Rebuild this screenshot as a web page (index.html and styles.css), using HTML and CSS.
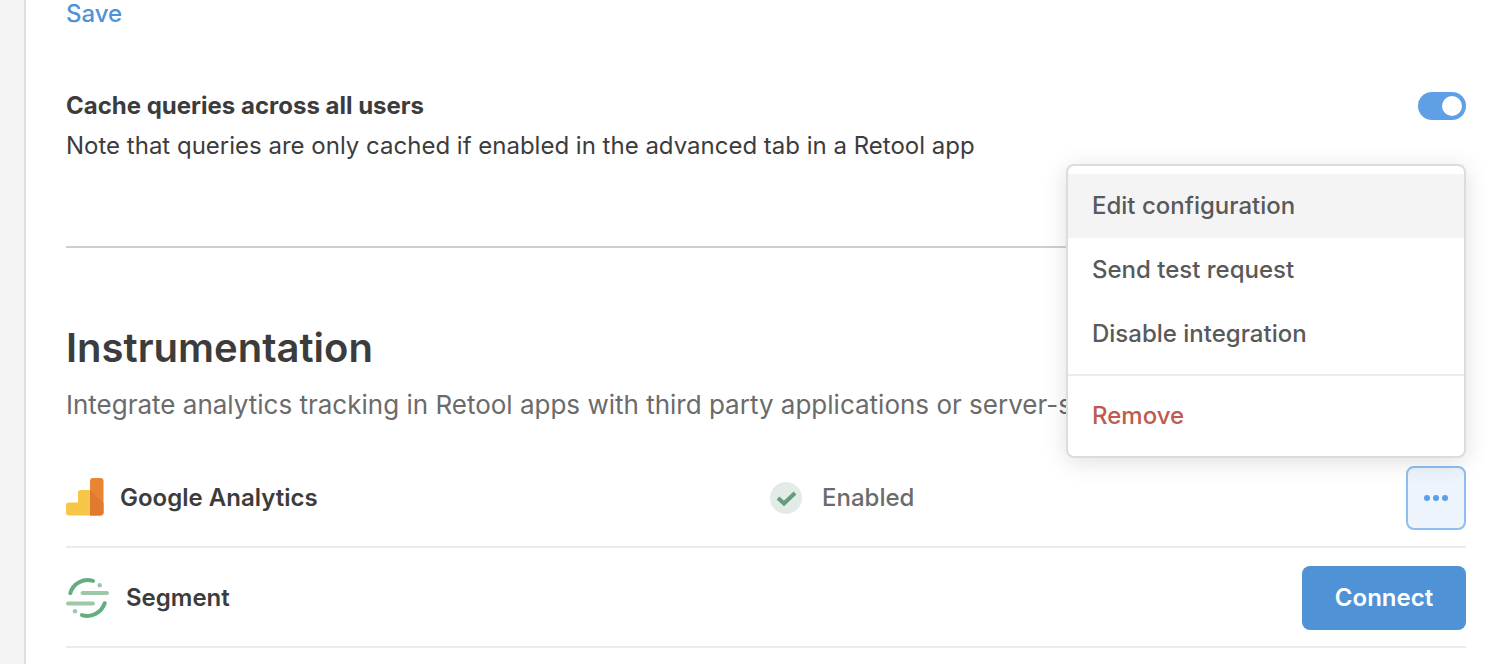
FILE: index.html
```html
<!DOCTYPE html>
<html lang="en">
<head>
    <meta charset="UTF-8">
    <meta name="viewport" content="width=device-width, initial-scale=1.0">
    <title>Advanced settings</title>
    <link rel="stylesheet" href="styles.css">
</head>
<body>
    <main class="content">
        <button type="button" class="save-btn">Save</button>

        <!-- Cache setting -->
        <section class="setting">
            <div class="setting-text">
                <label for="cacheQueries">Cache queries across all users</label>
                <p id="cacheNote">Note that queries are only cached if enabled in the advanced tab in a Retool app</p>
            </div>
            <input type="checkbox" id="cacheQueries" class="toggle" aria-describedby="cacheNote" checked>
        </section>

        <!-- Instrumentation -->
        <section class="instrumentation">
            <h2>Instrumentation</h2>
            <p class="description">Integrate analytics tracking in Retool apps with third party applications or server-side</p>

            <ul class="integrations">
                <li class="integration">
                    <div class="name">
                        <svg width="38" height="40" viewBox="0 0 38 40" aria-hidden="true">
                            <path d="M25 37.500H3a3 3 0 0 1-3-3V27.500a3 3 0 0 1 3-3h9V15a3 3 0 0 1 3-3h10z" fill="#f7c548"/>
                            <path d="M27 0h7.500a3 3 0 0 1 3 3v31.500a3 3 0 0 1-3 3H24V3a3 3 0 0 1 3-3z" fill="#e88432"/>
                            <path d="M24 12l13.500 13.500v9a3 3 0 0 1-3 3H24z" fill="#df7a2e"/>
                        </svg>
                        <span>Google Analytics</span>
                    </div>
                    <div class="details">
                        <span class="status">
                            <svg width="32" height="32" viewBox="0 0 32 32" aria-hidden="true">
                                <circle cx="16" cy="16" r="16" fill="#e2ebe6"/>
                                <path d="M8 16l6 5.500L25 11" fill="none" stroke="#639b7c" stroke-width="4"/>
                            </svg>
                            Enabled
                        </span>
                        <div class="actions">
                            <button type="button" class="more-btn" id="moreBtn" aria-label="More actions" aria-haspopup="true" aria-expanded="true">
                                <svg width="24" height="6" viewBox="0 0 24 6" fill="#5c9ee8" aria-hidden="true">
                                    <circle cx="3" cy="3" r="3"/>
                                    <circle cx="12" cy="3" r="3"/>
                                    <circle cx="21" cy="3" r="3"/>
                                </svg>
                            </button>
                            <div class="menu" role="menu" aria-labelledby="moreBtn">
                                <button type="button" role="menuitem" class="active">Edit configuration</button>
                                <button type="button" role="menuitem">Send test request</button>
                                <button type="button" role="menuitem">Disable integration</button>
                                <hr>
                                <button type="button" role="menuitem" class="danger">Remove</button>
                            </div>
                        </div>
                    </div>
                </li>
                <li class="integration">
                    <div class="name">
                        <svg width="44" height="40" viewBox="0 0 44 40" fill="none" stroke-width="4" stroke-linecap="round" aria-hidden="true">
                            <path d="M4.300 15.200A18.200 18.200 0 0 1 27 2.900" stroke="#64ad80"/>
                            <path d="M38.700 25.200A18.200 18.200 0 0 1 16 37.100" stroke="#64ad80"/>
                            <path d="M16.500 15H41M2 25.500h25" stroke="#9cc8a5"/>
                            <circle cx="33.700" cy="7.300" r="2.200" fill="#9cc8a5"/>
                            <circle cx="9" cy="33.200" r="2.200" fill="#9cc8a5"/>
                        </svg>
                        <span>Segment</span>
                    </div>
                    <div class="details">
                        <button type="button" class="connect-btn">Connect</button>
                    </div>
                </li>
            </ul>
        </section>
    </main>
</body>
</html>
```
FILE: styles.css
```css
* {
    box-sizing: border-box;
}
body {
    margin: 0;
    background-color: #f4f4f4;
    color: #3c3c3c;
    font-family: Inter, "Liberation Sans", sans-serif;
    font-size: 24px;
    line-height: 40px;
}
button {
    font: inherit;
    cursor: pointer;
}
p, h2 {
    margin: 0;
}
.content {
    min-height: 100vh;
    margin-left: 24px;
    padding: 0 46px 0 40px;
    border-left: 2px solid #dedede;
    background-color: white;
}
.save-btn {
    display: block;
    padding: 0;
    border: none;
    background: none;
    color: #5092d6;
    font-weight: 500;
    line-height: 28px;
}

/* Cache setting */
.setting {
    display: flex;
    justify-content: space-between;
    align-items: flex-start;
    padding: 58px 0 80px;
    border-bottom: 2px solid #cfcfcf;
}
.setting label {
    font-weight: 700;
}
.toggle {
    appearance: none;
    flex: none;
    width: 48px;
    height: 28px;
    margin: 6px 0;
    padding: 4px;
    border-radius: 14px;
    background-color: #ccc;
    cursor: pointer;
}
.toggle::before {
    content: "";
    display: block;
    width: 20px;
    height: 20px;
    border-radius: 50%;
    background-color: white;
}
.toggle:checked {
    background-color: #5f9fe6;
}
.toggle:checked::before {
    margin-left: auto;
}

/* Instrumentation */
.instrumentation {
    padding-top: 76px;
}
h2 {
    font-size: 40px;
    font-weight: 600;
    line-height: 48px;
}
.description {
    margin-top: 13px;
    color: #6b6b6b;
    font-size: 26px;
}
.integrations {
    margin: 23px 0 0;
    padding: 0;
    list-style: none;
}
.integration {
    display: grid;
    grid-template-columns: 1fr 1fr;
    column-gap: 8px;
    align-items: center;
    min-height: 100px;
    padding-top: 2px;
    border-bottom: 2px solid #ebebeb;
}
.name {
    display: flex;
    align-items: center;
    gap: 16px;
    font-weight: 600;
}
.details {
    display: flex;
    align-items: center;
}
.status {
    display: flex;
    align-items: center;
    gap: 20px;
    color: #6b6b6b;
    font-weight: 500;
}
.actions {
    position: relative;
    margin-left: auto;
}
.more-btn {
    display: flex;
    align-items: center;
    justify-content: center;
    width: 60px;
    height: 64px;
    padding: 0;
    border: 2px solid #8fbef0;
    border-radius: 8px;
    background-color: #edf4fc;
}
.connect-btn {
    min-width: 164px;
    height: 64px;
    margin-left: auto;
    padding: 0 32px;
    border: none;
    border-radius: 8px;
    background-color: #5092d6;
    color: white;
    font-weight: 600;
}

/* Dropdown menu */
.menu {
    position: absolute;
    right: 0;
    bottom: calc(100% + 8px);
    width: 400px;
    padding: 8px 0;
    border: 2px solid #dcdcdc;
    border-radius: 8px;
    background-color: white;
    box-shadow: 0 4px 24px rgba(0, 0, 0, 0.13);
}
.menu button {
    display: block;
    width: 100%;
    height: 64px;
    padding: 0 24px;
    border: none;
    background: none;
    color: #595959;
    font-weight: 500;
    text-align: left;
}
.menu button.active,
.menu button:hover {
    background-color: #f4f4f4;
}
.menu button.danger {
    color: #c05a4e;
}
.menu hr {
    margin: 8px 0;
    border: none;
    border-top: 2px solid #ebebeb;
}
```
